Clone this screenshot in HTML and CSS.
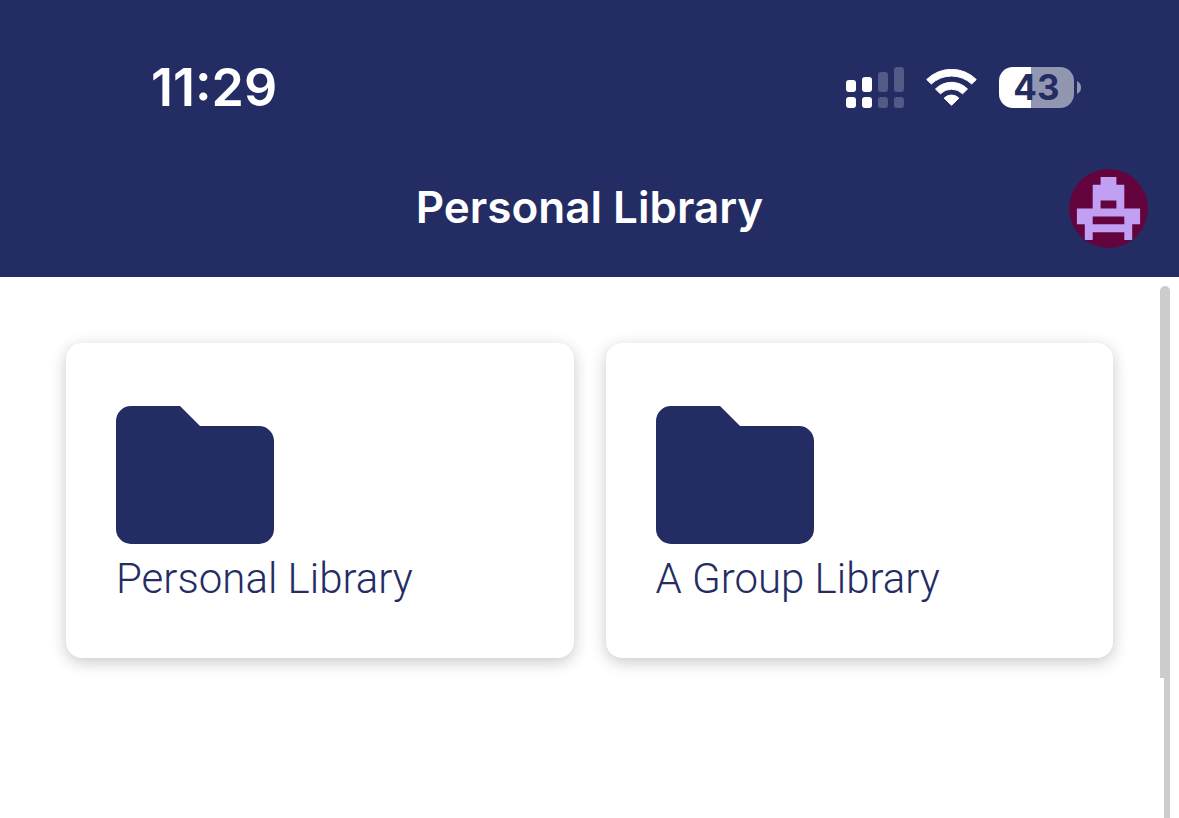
FILE: index.html
```html
<!DOCTYPE html>
<html lang="en">
<head>
    <meta charset="UTF-8">
    <meta name="viewport" content="width=device-width, initial-scale=1.0">
    <title>Personal Library</title>
    <link rel="stylesheet" href="styles.css">
</head>
<body>
    <header class="header">
        <div class="status-bar">
            <span class="time">11:29</span>
            <div class="status-icons">
                <svg class="signal" viewBox="0 0 58 41" aria-hidden="true">
                    <g fill="#fff">
                        <rect x="0" y="13" width="10" height="12" rx="3"/>
                        <rect x="16" y="10" width="10" height="15" rx="3"/>
                        <rect x="0" y="30" width="10" height="11" rx="3"/>
                        <rect x="16" y="30" width="10" height="11" rx="3"/>
                    </g>
                    <g fill="#525a85">
                        <rect x="32" y="5" width="10" height="20" rx="3"/>
                        <rect x="48" y="0" width="10" height="25" rx="3"/>
                        <rect x="32" y="30" width="10" height="11" rx="3"/>
                        <rect x="48" y="30" width="10" height="11" rx="3"/>
                    </g>
                </svg>
                <svg class="wifi" viewBox="0 0 51 37" fill="#fff" stroke="#fff" stroke-width="1" stroke-linejoin="round" aria-hidden="true">
                    <path d="M.7 10.7A35.3 35.3 0 0 1 50.3 10.7L45.7 15.2A29.6 29.6 0 0 0 5.3 15.2Z" transform="translate(0 -.2)"/>
                    <path d="M9.5 20A22.5 22.5 0 0 1 41.5 20L36.6 24.8A15.6 15.6 0 0 0 14.4 24.8Z"/>
                    <path d="M18.1 29.2A10.2 10.2 0 0 1 32.9 29.2L25.5 36.3Z"/>
                </svg>
                <div class="battery">
                    <span class="battery-level">43</span>
                    <svg class="battery-tip" viewBox="0 0 4 13" aria-hidden="true">
                        <path d="M0 0Q4 2 4 6.500T0 13Z" fill="#9297b1"/>
                    </svg>
                </div>
            </div>
        </div>
        <div class="title-bar">
            <h1 class="title">Personal Library</h1>
            <button class="avatar" type="button" aria-label="Account">
                <svg viewBox="0 0 10 10" aria-hidden="true">
                    <path fill="#c19ff3" fill-rule="evenodd" d="M4 1H6V2H7V5H9V7H8V9H7V8H3V9H2V7H1V5H3V2H4ZM4 4V5H6V4ZM3 6V7H7V6Z"/>
                </svg>
            </button>
        </div>
    </header>

    <main class="content">
        <nav class="libraries">
            <a class="card" href="#personal">
                <svg class="folder" viewBox="0 0 158 138" aria-hidden="true">
                    <path d="M15 0H64L84 20H143A15 15 0 0 1 158 35V123A15 15 0 0 1 143 138H15A15 15 0 0 1 0 123V15A15 15 0 0 1 15 0Z"/>
                </svg>
                <span class="card-name">Personal Library</span>
            </a>
            <a class="card" href="#group">
                <svg class="folder" viewBox="0 0 158 138" aria-hidden="true">
                    <path d="M15 0H64L84 20H143A15 15 0 0 1 158 35V123A15 15 0 0 1 143 138H15A15 15 0 0 1 0 123V15A15 15 0 0 1 15 0Z"/>
                </svg>
                <span class="card-name">A Group Library</span>
            </a>
        </nav>
        <div class="scrollbar">
            <div class="scroll-thumb"></div>
            <div class="scroll-track"></div>
        </div>
    </main>
</body>
</html>
```

FILE: styles.css
```css
* {
    box-sizing: border-box;
}
body {
    margin: 0;
    min-height: 100vh;
    display: flex;
    flex-direction: column;
    background-color: white;
    color: #232c63;
    font-family: Inter, "Liberation Sans", sans-serif;
}
.header {
    background-color: #232c63;
    color: white;
    padding: 55px 31px 29px;
}
.status-bar {
    display: flex;
    justify-content: space-between;
    align-items: center;
    height: 64px;
    padding: 0 67px 0 120px;
}
.time {
    font-size: 52px;
    font-weight: 600;
}
.status-icons {
    display: flex;
    align-items: center;
    gap: 22px;
}
.signal {
    width: 58px;
    height: 41px;
}
.wifi {
    width: 51px;
    height: 37px;
}
.battery {
    display: flex;
    align-items: center;
    gap: 3px;
}
.battery-level {
    width: 75px;
    height: 41px;
    border-radius: 14px;
    background: linear-gradient(to right, white 43%, #9297b1 43%);
    color: #232c63;
    font-size: 35px;
    font-weight: 700;
    line-height: 41px;
    text-align: center;
}
.battery-tip {
    width: 4px;
    height: 13px;
}
.title-bar {
    display: grid;
    grid-template-columns: 1fr auto 1fr;
    align-items: center;
    margin-top: 50px;
}
.title {
    grid-column: 2;
    margin: 0;
    padding-bottom: 4px;
    font-size: 44px;
    font-weight: 600;
    line-height: 56px;
}
.avatar {
    justify-self: end;
    width: 79px;
    height: 79px;
    padding: 0;
    border: none;
    border-radius: 50%;
    background-color: #64043f;
    overflow: hidden;
    cursor: pointer;
}
.avatar svg {
    display: block;
    width: 100%;
}
.content {
    position: relative;
    flex: 1;
    padding: 66px;
}
.libraries {
    display: grid;
    grid-template-columns: 1fr 1fr;
    gap: 32px;
}
.card {
    padding: 63px 50px 58px;
    border-radius: 16px;
    background-color: white;
    box-shadow: 0 4px 16px rgba(0, 0, 0, 0.22);
    color: #232c63;
    text-decoration: none;
}
.folder {
    display: block;
    width: 158px;
    height: 138px;
    fill: #232c63;
}
.card-name {
    display: block;
    margin-top: 14px;
    font-family: Roboto, sans-serif;
    font-size: 42px;
    font-weight: 300;
    line-height: 42px;
}
/* overlay scrollbar, floats over the content */
.scrollbar {
    position: absolute;
    top: 9px;
    right: 9px;
    bottom: 0;
    display: flex;
    flex-direction: column;
    align-items: flex-end;
}
.scroll-thumb {
    width: 10px;
    height: 392px;
    border-radius: 5px 5px 0 0;
    background-color: #cccccc;
}
.scroll-track {
    flex: 1;
    width: 6px;
    background-color: #cccccc;
}
```
